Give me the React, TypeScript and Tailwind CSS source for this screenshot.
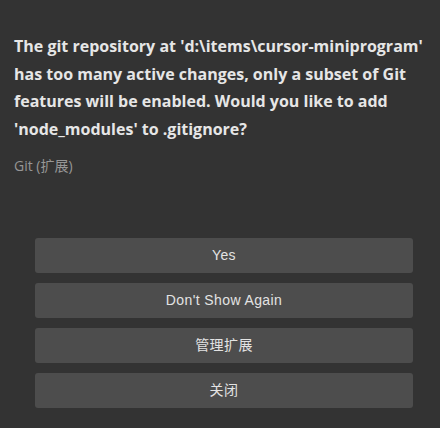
export default function App() {
  const buttons = ["Yes", "Don't Show Again", "管理扩展", "关闭"];
  return (
    <div className="w-[440px] h-[428px] bg-[#333333] flex flex-col overflow-hidden">
      <div className="px-[14px] pt-[33px]">
        <p className="font-['Open_Sans','Noto_Sans_CJK_SC',sans-serif] font-bold text-[16px] leading-[27.5px] text-[#e6e6e6]">
          The git repository at 'd:\items\cursor-miniprogram' has too many active changes, only a subset of Git features will be enabled. Would you like to add 'node_modules' to .gitignore?
        </p>
        <p className="mt-[12px] font-['Open_Sans','Noto_Sans_CJK_SC',sans-serif] text-[14px] text-[#969696]">
          Git (扩展)
        </p>
      </div>
      <div className="mt-auto mb-[20px] pl-[35px] pr-[27px] flex flex-col gap-[10px]">
        {buttons.map((b) => (
          <button
            key={b}
            className="h-[35px] w-full rounded-[3px] bg-[#4d4d4d] text-[#e3e3e3] text-[14px] tracking-[0.4px] font-['Liberation_Sans','Noto_Sans_CJK_SC',sans-serif]"
          >
            {b}
          </button>
        ))}
      </div>
    </div>
  );
}
